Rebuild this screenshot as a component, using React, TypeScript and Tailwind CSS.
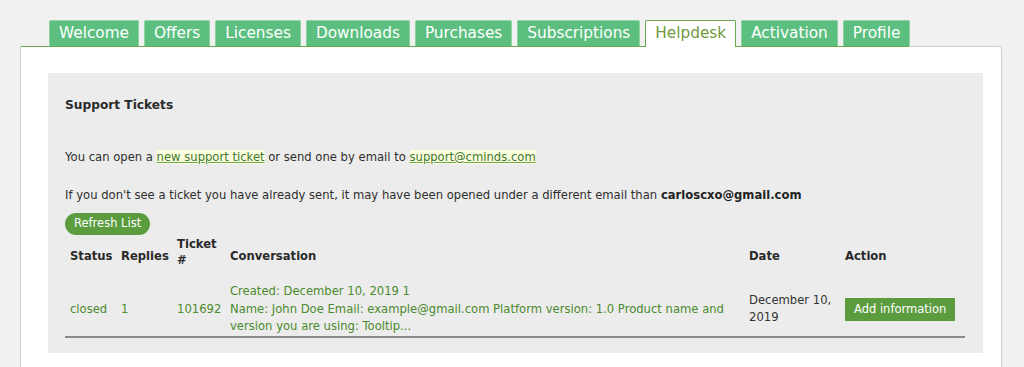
import React from "react";

const tabs = [
  "Welcome",
  "Offers",
  "Licenses",
  "Downloads",
  "Purchases",
  "Subscriptions",
  "Helpdesk",
  "Activation",
  "Profile",
];

const App: React.FC = () => {
  return (
    <div
      className="w-[1024px] h-[367px] overflow-hidden bg-[#f1f1f1] text-[#333]"
      style={{ fontFamily: "Verdana, 'DejaVu Sans', sans-serif" }}
    >
      <div className="pt-[20px] pl-[20px] pr-[22px]">
        {/* tab bar */}
        <div className="flex items-end gap-[5px] pl-[29px] h-[26px]">
          {tabs.map((t) => (
            <div
              key={t}
              className={`px-[9px] flex items-center rounded-t-[2px] text-[15.3px] leading-none ${
                t == "Helpdesk"
                  ? "bg-white text-[#6f9a3e] border border-b-0 border-[#6aa84f] relative z-10 h-[27px] -mb-px"
                  : "h-[26px] bg-[#5cbf80] text-white border border-[#8fd3a5] border-b-0"
              }`}
            >
              {t}
            </div>
          ))}
        </div>
        {/* content box */}
        <div className="bg-white border border-[#cfcfcf] rounded-tr-[3px] h-[330px] pt-[26px] pl-[27px] pr-[18px] relative">
          <div className="absolute -top-px left-0 w-[888px] h-px bg-[#6aa84f]" />
          <div className="bg-[#ececec] px-[17px] pt-[24px] pb-[15px] text-[11.6px]">
            <h2 className="font-bold text-[12.2px] leading-[16px] text-[#2a2a2a]">
              Support Tickets
            </h2>
            <p className="mt-[36px] leading-[16px] text-[#2e2e2e]">
              You can open a{" "}
              <a className="bg-[#fdfde0] text-[#3e7a2c] underline decoration-[#6aa84f]">
                new support ticket
              </a>{" "}
              or send one by email to{" "}
              <a className="bg-[#fdfde0] text-[#3e7a2c] underline decoration-[#6aa84f]">
                support@cminds.com
              </a>
            </p>
            <p className="mt-[22px] leading-[16px] text-[#2e2e2e]">
              If you don't see a ticket you have already sent, it may have been
              opened under a different email than{" "}
              <b className="text-[#222]">carloscxo@gmail.com</b>
            </p>
            <button className="mt-[10px] h-[22px] px-[9px] rounded-full bg-[#5b9c3f] text-white text-[11.5px] leading-none">
              Refresh List
            </button>
            <table className="w-[900px] border-collapse text-[11.6px] table-fixed">
              <colgroup>
                <col className="w-[51px]" />
                <col className="w-[56px]" />
                <col className="w-[53px]" />
                <col className="w-[519px]" />
                <col className="w-[96px]" />
                <col className="w-[125px]" />
              </colgroup>
              <thead>
                <tr className="text-left font-bold text-[#2a2a2a] leading-[16px]">
                  <th className="pl-[5px] pt-[9px] pb-[1px] align-middle">Status</th>
                  <th className="pl-[5px] pt-[9px] pb-[1px] align-middle">Replies</th>
                  <th className="pl-[5px] py-[1px] align-middle">
                    Ticket
                    <br />#
                  </th>
                  <th className="pl-[5px] pt-[9px] pb-[1px] align-middle">Conversation</th>
                  <th className="pl-[5px] pt-[9px] pb-[1px] align-middle">Date</th>
                  <th className="pl-[5px] pt-[9px] pb-[1px] align-middle">Action</th>
                </tr>
              </thead>
              <tbody>
                <tr className="border-b-2 border-[#8a8a8a] leading-[17.5px] text-[#4b8a2e]">
                  <td className="pl-[5px] pt-[14px] pb-0 align-middle">closed</td>
                  <td className="pl-[5px] pt-[14px] pb-0 align-middle">1</td>
                  <td className="pl-[5px] pt-[14px] pb-0 align-middle">101692</td>
                  <td className="pl-[5px] pr-[12px] pt-[14px] pb-0 align-middle">
                    Created: December 10, 2019 1
                    <br />
                    Name: John Doe Email: example@gmail.com Platform version: 1.0
                    Product name and version you are using: Tooltip...
                  </td>
                  <td className="pl-[5px] pt-[14px] pb-0 align-middle text-[#333]">
                    December 10,
                    <br />
                    2019
                  </td>
                  <td className="pl-[5px] pt-[14px] pb-0 align-middle">
                    <span className="inline-flex items-center h-[23px] px-[9px] bg-[#5b9c3f] text-white text-[11.5px] leading-none">
                      Add information
                    </span>
                  </td>
                </tr>
              </tbody>
            </table>
          </div>
        </div>
      </div>
    </div>
  );
};

export default App;
